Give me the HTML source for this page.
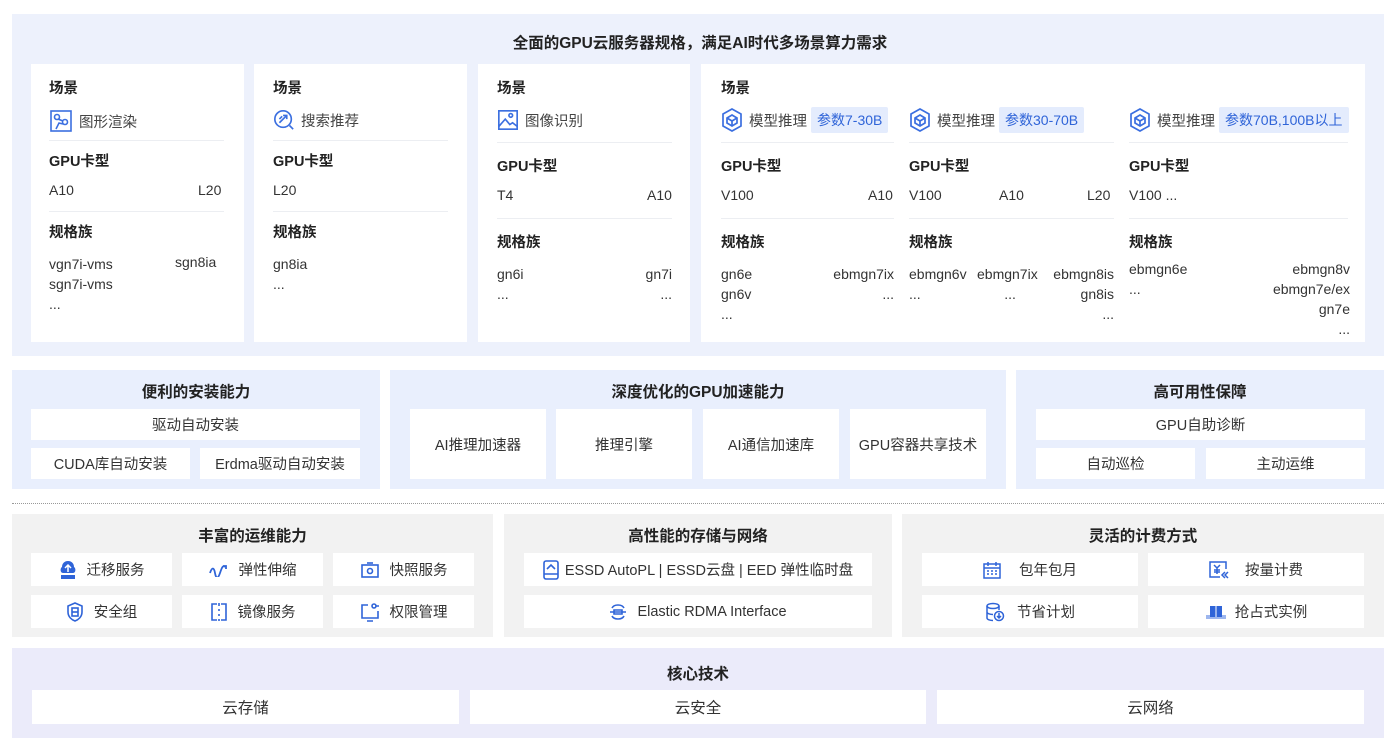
<!DOCTYPE html>
<html><head><meta charset="utf-8"><style>
*{margin:0;padding:0;box-sizing:border-box}
body{width:1400px;height:755px;background:#fff;font-family:"Liberation Sans","Noto Sans CJK SC",sans-serif;color:#333;position:relative;overflow:hidden}
.a{position:absolute}
.bg1{background:#edf1fc}
.bg2{background:#e9effd}
.bg3{background:#f2f2f2}
.bg4{background:#ebebfa}
.w{background:#fff}
.t{position:absolute;left:0;right:0;text-align:center;font-size:15.5px;font-weight:bold;color:#222}
.h{position:absolute;font-size:14.5px;font-weight:bold;color:#222}
.v{position:absolute;font-size:14px;color:#333;white-space:nowrap}
.r{text-align:right}
.ln{position:absolute;height:1px;background:#eceef2}
.bx{position:absolute;background:#fff;display:flex;align-items:center;justify-content:center;font-size:14.5px;color:#333}
.bx svg{margin-right:10px}
.tag{background:#e4ecfd;color:#2f64d8;padding:3px 6px;border-radius:2px;margin-left:4px;font-size:14px}
.lb{position:absolute;display:flex;align-items:center;font-size:14.5px;color:#444;white-space:nowrap}
.lb svg{margin-right:6px}
</style></head><body>

<div class="a bg1" style="left:12px;top:14px;width:1372px;height:342px"></div>
<div class="t" style="top:31px">全面的GPU云服务器规格，满足AI时代多场景算力需求</div>

<!-- card1 -->
<div class="a w" style="left:31px;top:64px;width:213px;height:278px"></div>
<div class="h" style="left:49px;top:77px">场景</div>
<div class="lb" style="left:49px;top:109px"><svg width="24" height="24" viewBox="0 0 24 24" fill="none" stroke="#3b6fe0" stroke-width="1.6"><rect x="2" y="2" width="20" height="20"/><circle cx="8" cy="8" r="2.5"/><circle cx="16" cy="13" r="2.5"/><path d="M9 10l5 2M7 20l3-6 4 1"/></svg>图形渲染</div>
<div class="ln" style="left:49px;top:140px;width:175px"></div>
<div class="h" style="left:49px;top:150px">GPU卡型</div>
<div class="v" style="left:49px;top:182px">A10</div><div class="v" style="left:198px;top:182px">L20</div>
<div class="ln" style="left:49px;top:211px;width:175px"></div>
<div class="h" style="left:49px;top:221px">规格族</div>
<div class="v" style="left:49px;top:254px;line-height:20px">vgn7i-vms<br>sgn7i-vms<br>...</div>
<div class="v" style="left:175px;top:254px">sgn8ia</div>

<!-- card2 -->
<div class="a w" style="left:254px;top:64px;width:213px;height:278px"></div>
<div class="h" style="left:273px;top:77px">场景</div>
<div class="lb" style="left:273px;top:109px"><svg width="22" height="22" viewBox="0 0 24 24" fill="none" stroke="#3b6fe0" stroke-width="1.8"><circle cx="11" cy="11" r="9"/><path d="M18 18l4 4M7 15l8-8M11 7h4v4M7 11l3-3"/></svg>搜索推荐</div>
<div class="ln" style="left:273px;top:140px;width:175px"></div>
<div class="h" style="left:273px;top:150px">GPU卡型</div>
<div class="v" style="left:273px;top:182px">L20</div>
<div class="ln" style="left:273px;top:211px;width:175px"></div>
<div class="h" style="left:273px;top:221px">规格族</div>
<div class="v" style="left:273px;top:254px;line-height:20px">gn8ia<br>...</div>

<!-- card3 -->
<div class="a w" style="left:478px;top:64px;width:212px;height:278px"></div>
<div class="h" style="left:497px;top:77px">场景</div>
<div class="lb" style="left:497px;top:109px"><svg width="22" height="22" viewBox="0 0 24 24" fill="none" stroke="#3b6fe0" stroke-width="1.8"><rect x="2" y="2" width="20" height="20"/><circle cx="15" cy="7" r="2"/><path d="M2 19l7-8 5 6 3-2 5 4"/></svg>图像识别</div>
<div class="ln" style="left:497px;top:142px;width:175px"></div>
<div class="h" style="left:497px;top:155px">GPU卡型</div>
<div class="v" style="left:497px;top:187px">T4</div><div class="v" style="left:647px;top:187px">A10</div>
<div class="ln" style="left:497px;top:218px;width:175px"></div>
<div class="h" style="left:497px;top:231px">规格族</div>
<div class="v" style="left:497px;top:264px;line-height:20px">gn6i<br>...</div>
<div class="v r" style="left:620px;width:52px;top:264px;line-height:20px">gn7i<br>...</div>

<!-- card4 -->
<div class="a w" style="left:701px;top:64px;width:664px;height:278px"></div>
<div class="h" style="left:721px;top:77px">场景</div>
<div class="lb" style="left:721px;top:107px"><svg width="22" height="24" viewBox="0 0 22 24" fill="none" stroke="#3b6fe0" stroke-width="1.7"><path d="M11 1l9 5v12l-9 5-9-5V6z"/><path d="M11 7l5 3v5l-5 3-5-3v-5z"/><path d="M6 10l5 3 5-3M11 13v5"/></svg>模型推理<span class="tag">参数7-30B</span></div>
<div class="lb" style="left:909px;top:107px"><svg width="22" height="24" viewBox="0 0 22 24" fill="none" stroke="#3b6fe0" stroke-width="1.7"><path d="M11 1l9 5v12l-9 5-9-5V6z"/><path d="M11 7l5 3v5l-5 3-5-3v-5z"/><path d="M6 10l5 3 5-3M11 13v5"/></svg>模型推理<span class="tag">参数30-70B</span></div>
<div class="lb" style="left:1129px;top:107px"><svg width="22" height="24" viewBox="0 0 22 24" fill="none" stroke="#3b6fe0" stroke-width="1.7"><path d="M11 1l9 5v12l-9 5-9-5V6z"/><path d="M11 7l5 3v5l-5 3-5-3v-5z"/><path d="M6 10l5 3 5-3M11 13v5"/></svg>模型推理<span class="tag">参数70B,100B以上</span></div>
<div class="ln" style="left:721px;top:142px;width:173px"></div>
<div class="ln" style="left:909px;top:142px;width:205px"></div>
<div class="ln" style="left:1129px;top:142px;width:219px"></div>
<div class="h" style="left:721px;top:155px">GPU卡型</div>
<div class="h" style="left:909px;top:155px">GPU卡型</div>
<div class="h" style="left:1129px;top:155px">GPU卡型</div>
<div class="v" style="left:721px;top:187px">V100</div><div class="v" style="left:868px;top:187px">A10</div>
<div class="v" style="left:909px;top:187px">V100</div><div class="v" style="left:999px;top:187px">A10</div><div class="v" style="left:1087px;top:187px">L20</div>
<div class="v" style="left:1129px;top:187px">V100 ...</div>
<div class="ln" style="left:721px;top:218px;width:173px"></div>
<div class="ln" style="left:909px;top:218px;width:205px"></div>
<div class="ln" style="left:1129px;top:218px;width:219px"></div>
<div class="h" style="left:721px;top:231px">规格族</div>
<div class="h" style="left:909px;top:231px">规格族</div>
<div class="h" style="left:1129px;top:231px">规格族</div>
<div class="v" style="left:721px;top:264px;line-height:20px">gn6e<br>gn6v<br>...</div>
<div class="v r" style="left:800px;width:94px;top:264px;line-height:20px">ebmgn7ix<br>...</div>
<div class="v" style="left:909px;top:264px;line-height:20px">ebmgn6v<br>...</div>
<div class="v" style="left:977px;top:264px;line-height:20px">ebmgn7ix<br>&nbsp;&nbsp;&nbsp;&nbsp;&nbsp;&nbsp;&nbsp;...</div>
<div class="v r" style="left:1040px;width:74px;top:264px;line-height:20px">ebmgn8is<br>gn8is<br>...</div>
<div class="v" style="left:1129px;top:259px;line-height:20px">ebmgn6e<br>...</div>
<div class="v r" style="left:1230px;width:120px;top:259px;line-height:20px">ebmgn8v<br>ebmgn7e/ex<br>gn7e<br>...</div>

<!-- middle row -->
<div class="a bg2" style="left:12px;top:370px;width:368px;height:119px"><div class="t" style="top:10px">便利的安装能力</div></div>
<div class="a bg2" style="left:390px;top:370px;width:616px;height:119px"><div class="t" style="top:10px">深度优化的GPU加速能力</div></div>
<div class="a bg2" style="left:1016px;top:370px;width:368px;height:119px"><div class="t" style="top:10px">高可用性保障</div></div>
<div class="bx" style="left:31px;top:409px;width:329px;height:31px">驱动自动安装</div>
<div class="bx" style="left:31px;top:448px;width:159px;height:31px">CUDA库自动安装</div>
<div class="bx" style="left:200px;top:448px;width:160px;height:31px">Erdma驱动自动安装</div>
<div class="bx" style="left:410px;top:409px;width:136px;height:70px">AI推理加速器</div>
<div class="bx" style="left:556px;top:409px;width:136px;height:70px">推理引擎</div>
<div class="bx" style="left:703px;top:409px;width:136px;height:70px">AI通信加速库</div>
<div class="bx" style="left:850px;top:409px;width:136px;height:70px">GPU容器共享技术</div>
<div class="bx" style="left:1036px;top:409px;width:329px;height:31px">GPU自助诊断</div>
<div class="bx" style="left:1036px;top:448px;width:159px;height:31px">自动巡检</div>
<div class="bx" style="left:1206px;top:448px;width:159px;height:31px">主动运维</div>

<div class="a" style="left:12px;top:503px;width:1372px;border-top:1px dotted #999"></div>

<!-- bottom row -->
<div class="a bg3" style="left:12px;top:514px;width:481px;height:123px"><div class="t" style="top:10px">丰富的运维能力</div></div>
<div class="a bg3" style="left:504px;top:514px;width:388px;height:123px"><div class="t" style="top:10px">高性能的存储与网络</div></div>
<div class="a bg3" style="left:902px;top:514px;width:482px;height:123px"><div class="t" style="top:10px">灵活的计费方式</div></div>

<div class="bx" style="left:31px;top:553px;width:141px;height:33px"><svg width="18" height="20" viewBox="0 0 18 20"><path d="M9 1C5 1 3 4 3 7 1 8 1 13 4 13h10c3 0 3-5 1-6 0-3-2-6-6-6z" fill="#2f64d8"/><path d="M9 5v7M6 8l3-3 3 3" stroke="#fff" stroke-width="1.5" fill="none"/><rect x="2" y="15" width="14" height="4" fill="#2f64d8"/></svg>迁移服务</div>
<div class="bx" style="left:182px;top:553px;width:141px;height:33px"><svg width="20" height="14" viewBox="0 0 20 14" fill="none" stroke="#2f64d8" stroke-width="1.8"><path d="M1 10c2-6 4-6 5 0s3 6 5 0 3-8 5-6M14 3l3 0 0 3"/></svg>弹性伸缩</div>
<div class="bx" style="left:333px;top:553px;width:141px;height:33px"><svg width="20" height="18" viewBox="0 0 20 18" fill="none" stroke="#2f64d8" stroke-width="1.6"><rect x="2" y="4" width="16" height="12"/><circle cx="10" cy="10" r="2.5"/><path d="M7 2h6"/></svg>快照服务</div>
<div class="bx" style="left:31px;top:595px;width:141px;height:33px"><svg width="18" height="20" viewBox="0 0 18 20" fill="none" stroke="#2f64d8" stroke-width="1.6"><path d="M9 1l7 3v6c0 5-4 8-7 9-3-1-7-4-7-9V4z"/><rect x="6" y="6" width="6" height="8"/><path d="M6 10h6"/></svg>安全组</div>
<div class="bx" style="left:182px;top:595px;width:141px;height:33px"><svg width="18" height="20" viewBox="0 0 18 20" fill="none" stroke="#2f64d8" stroke-width="1.6"><path d="M7 2H2v16h5M11 2h5v16h-5"/><path d="M9 1v3M9 7v2M9 12v2M9 17v2"/></svg>镜像服务</div>
<div class="bx" style="left:333px;top:595px;width:141px;height:33px"><svg width="20" height="20" viewBox="0 0 20 20" fill="none" stroke="#2f64d8" stroke-width="1.6"><path d="M8 3H2v13h16V9"/><circle cx="14" cy="4" r="2"/><path d="M16 4h3M7 19h6"/></svg>权限管理</div>

<div class="bx" style="left:524px;top:553px;width:348px;height:33px"><svg width="16" height="20" viewBox="0 0 16 20" fill="none" stroke="#2f64d8" stroke-width="1.6" style="margin-right:6px"><rect x="1" y="1" width="14" height="18" rx="2"/><path d="M4 9l4-4 4 4M1 14h14"/></svg>ESSD AutoPL | ESSD云盘 | EED 弹性临时盘</div>
<div class="bx" style="left:524px;top:595px;width:348px;height:33px"><svg width="18" height="20" viewBox="0 0 18 20" fill="none" stroke="#2f64d8" stroke-width="1.6"><path d="M3 6c2-4 10-4 12 0M3 14c2 4 10 4 12 0M1 10h16M5 8h8v4H5z"/></svg>Elastic RDMA Interface</div>

<div class="bx" style="left:922px;top:553px;width:216px;height:33px"><svg width="18" height="18" viewBox="0 0 18 18" fill="none" stroke="#2f64d8" stroke-width="1.5" style="margin-right:18px"><rect x="1" y="3" width="16" height="14"/><path d="M1 7h16M5 1v4M13 1v4M4 10h2M8 10h2M12 10h2M4 13h2M8 13h2M12 13h2"/></svg>包年包月</div>
<div class="bx" style="left:1148px;top:553px;width:216px;height:33px"><svg width="20" height="18" viewBox="0 0 20 18" fill="none" stroke="#2f64d8" stroke-width="1.5" style="margin-right:16px"><path d="M17 8V1H1v15h10"/><path d="M5 4l3 3 3-3M8 7v6M5 9h6M5 11h6M19 11l-3 3 3 3M16 11l-3 3 3 3"/></svg>按量计费</div>
<div class="bx" style="left:922px;top:595px;width:216px;height:33px"><svg width="20" height="20" viewBox="0 0 20 20" fill="none" stroke="#2f64d8" stroke-width="1.5" style="margin-right:12px"><ellipse cx="8" cy="4" rx="6" ry="2.5"/><path d="M2 4v12c0 1.5 3 2.5 6 2.5M14 4v4M2 10c0 1.5 3 2.5 6 2.5"/><circle cx="14" cy="14" r="4.5"/><path d="M14 11v5M12 14l2 2 2-2"/></svg>节省计划</div>
<div class="bx" style="left:1148px;top:595px;width:216px;height:33px"><svg width="22" height="16" viewBox="0 0 22 16" style="margin-right:8px"><path d="M1 11h20v4H1z" fill="#9db6ee"/><path d="M5 2h12v11H5z" fill="#2f64d8"/><path d="M11 2v11" stroke="#fff"/></svg>抢占式实例</div>

<!-- core -->
<div class="a bg4" style="left:12px;top:648px;width:1372px;height:90px"><div class="t" style="top:14px">核心技术</div></div>
<div class="bx" style="left:32px;top:690px;width:427px;height:34px;font-size:15.5px">云存储</div>
<div class="bx" style="left:470px;top:690px;width:456px;height:34px;font-size:15.5px">云安全</div>
<div class="bx" style="left:937px;top:690px;width:427px;height:34px;font-size:15.5px">云网络</div>
</body></html>
